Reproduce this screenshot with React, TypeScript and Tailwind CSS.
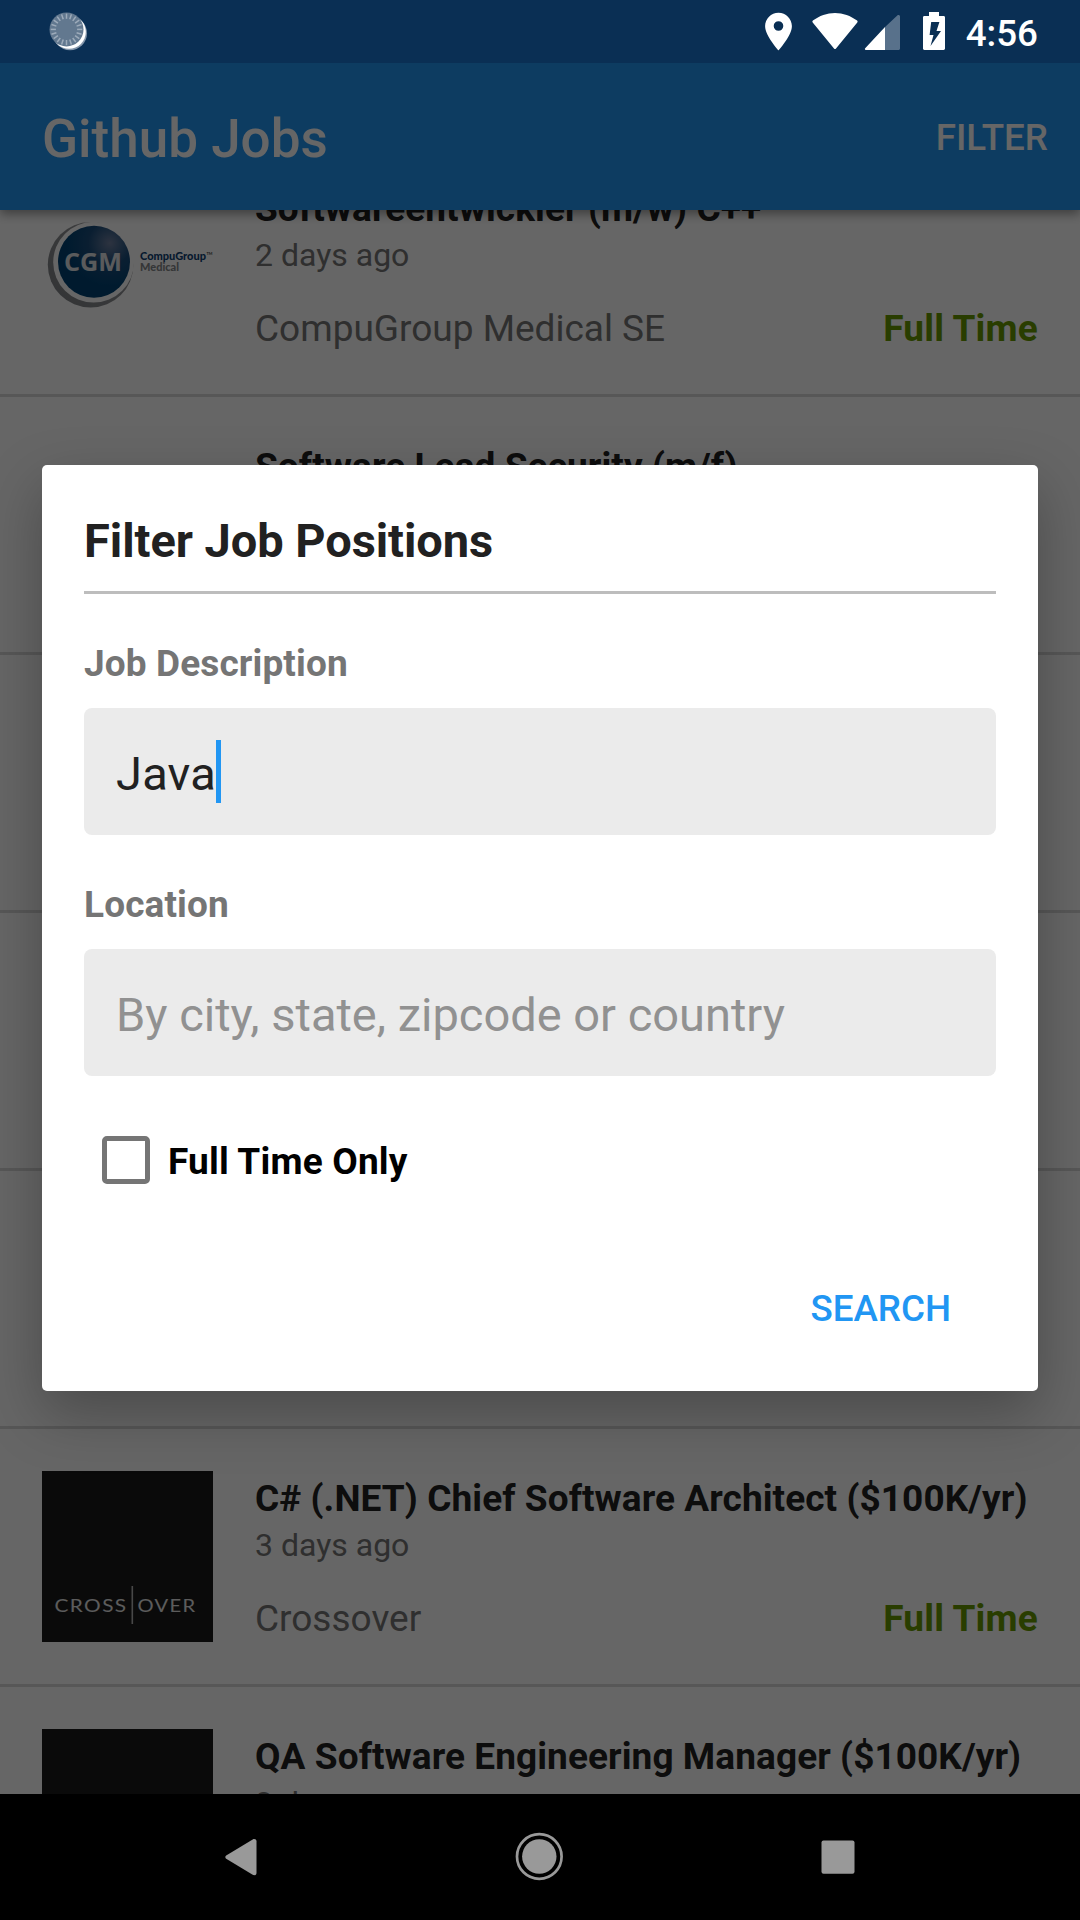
import React from "react";

type Job = {
  title: string;
  posted: string;
  company: string;
  logo: "cgm" | "crossover" | "none";
};

const jobs: (Job | null)[] = [
  { title: "Softwareentwickler (m/w) C++", posted: "2 days ago", company: "CompuGroup Medical SE", logo: "cgm" },
  { title: "Software Lead Security (m/f)", posted: "", company: "", logo: "none" },
  null,
  null,
  null,
  { title: "C# (.NET) Chief Software Architect ($100K/yr)", posted: "3 days ago", company: "Crossover", logo: "crossover" },
  { title: "QA Software Engineering Manager ($100K/yr)", posted: "3 days ago", company: "Crossover", logo: "crossover" },
];

function CgmLogo() {
  return (
    <svg width="171" height="171" viewBox="42 181 171 171">
      <defs>
        <radialGradient id="globe" cx="0.72" cy="0.24" r="0.6">
          <stop offset="0" stopColor="#7080a0" />
          <stop offset="0.5" stopColor="#1a4d7c" />
          <stop offset="1" stopColor="#004374" />
        </radialGradient>
        <linearGradient id="rim" x1="0" y1="1" x2="1" y2="0">
          <stop offset="0" stopColor="#7f8286" />
          <stop offset="0.6" stopColor="#8f9194" />
          <stop offset="1" stopColor="#c4c5c6" />
        </linearGradient>
      </defs>
      <circle cx="90.6" cy="264.8" r="42.8" fill="url(#rim)" />
      <circle cx="93.6" cy="262.2" r="40.4" fill="#fff" />
      <circle cx="94" cy="261.8" r="36" fill="url(#globe)" />
      <text x="64" y="270.7" fontFamily="Open Sans" fontWeight="700" fontSize="25" fill="#e2e4e6" textLength="58" lengthAdjust="spacingAndGlyphs">CGM</text>
      <text x="140" y="260.4" fontFamily="Lato" fontWeight="900" fontSize="11" fill="#0f3f74" textLength="66" lengthAdjust="spacingAndGlyphs">CompuGroup</text>
      <text x="206.5" y="254.5" fontFamily="Lato" fontSize="4.5" fontWeight="700" fill="#444" textLength="6" lengthAdjust="spacingAndGlyphs">TM</text>
      <text x="140" y="271" fontFamily="Lato" fontWeight="900" fontSize="11" fill="#85878a" textLength="39" lengthAdjust="spacingAndGlyphs">Medical</text>
    </svg>
  );
}

function CrossoverLogo() {
  return (
    <svg width="171" height="171" viewBox="0 0 171 171">
      <rect width="171" height="171" fill="#1a1a1a" />
      <g fontFamily="Lato" fontSize="18" letterSpacing="1.2" fill="#e6e6e6">
        <text x="12.5" y="141" textLength="73" lengthAdjust="spacingAndGlyphs">CROSS</text>
        <text x="95.5" y="141" textLength="59" lengthAdjust="spacingAndGlyphs">OVER</text>
      </g>
      <rect x="89.5" y="115" width="1.6" height="38" fill="#b5b5b5" />
    </svg>
  );
}

function JobRow({ job }: { job: Job | null }) {
  return (
    <li className="box-border flex h-[258px] shrink-0 gap-[42px] border-b-[3px] border-[#dadada] px-[42px]">
      <div className="mt-[42px] size-[171px] shrink-0">
        {job?.logo === "cgm" && <CgmLogo />}
        {job?.logo === "crossover" && <CrossoverLogo />}
      </div>
      {job && (
        <div className="min-w-0 flex-1 pt-[48px]">
          <h2 className="text-[37px] leading-[43px] font-bold tracking-[0.08px] whitespace-nowrap text-[#212121]">{job.title}</h2>
          {job.company && (
            <>
              <p className="mt-[7px] text-[32px] leading-[37px] text-[#757575]">{job.posted}</p>
              <div className="mt-[33px] flex justify-between text-[37px] leading-[43px]">
                <span className="text-[#757575]">{job.company}</span>
                <span className="font-bold tracking-[0.18px] text-[#669900]">Full Time</span>
              </div>
            </>
          )}
        </div>
      )}
    </li>
  );
}

function SyncIcon() {
  const ticks = Array.from({ length: 20 }, (_, i) => i * 18);
  return (
    <svg width="41" height="41" viewBox="48 11 41 41">
      <circle cx="70" cy="33.2" r="17" fill="#8496aa" />
      <circle cx="69" cy="32" r="16.8" fill="#fff" />
      <circle cx="66.5" cy="29.4" r="17" fill="#62788f" />
      {ticks.map((a) => (
        <line key={a} x1="66.5" y1="13.6" x2="66.5" y2="18.8" stroke="#9dabba" strokeWidth="1.5" transform={`rotate(${a} 66.5 29.4)`} />
      ))}
    </svg>
  );
}

function StatusIcons() {
  return (
    <svg width="190" height="63" viewBox="760 0 190 63" fill="#fff">
      <path fillRule="evenodd" d="M778.5 12.7c-7.4 0-13.4 6-13.4 13.3 0 9.9 13.4 24.3 13.4 24.3s13.4-14.4 13.4-24.3c0-7.3-6-13.3-13.4-13.3zm0 18.1a4.8 4.8 0 1 1 0-9.6 4.8 4.8 0 0 1 0 9.6z" />
      <path d="M812.7 22.4c-.5-.6-.4-1.3.2-1.8C819.3 15.8 827 13 835 13s15.7 2.8 22.1 7.6c.6.5.7 1.2.2 1.8L836 48.5c-.5.7-1.5.7-2 0z" />
      <path d="M885 27v23h-19.2c-.9 0-1.3-1-.6-1.7z" />
      <path fillOpacity="0.32" d="M885 27l12.3-11.5c.9-.9 2.7-.5 2.7 1V48.5c0 .8-.7 1.5-1.5 1.5H885z" />
      <path fillRule="evenodd" d="M929 12h10v4h4.6c.8 0 1.4.6 1.4 1.4v31.2c0 .8-.6 1.4-1.4 1.4h-19.2c-.8 0-1.4-.6-1.4-1.4V17.4c0-.8.6-1.4 1.4-1.4H929zM931.2 22l-1.6 13h3.9l-3 11 10.500-15h-4.500l2.900-9z" />
    </svg>
  );
}

function NavBar() {
  return (
    <nav className="relative z-10 flex h-[126px] shrink-0 items-center justify-between bg-black px-[215px]">
      <svg width="52" height="52" viewBox="215 1831 52 52">
        <path d="M226.2 1855.4l26.5-16c1.8-1 3.8-.1 3.8 1.900v31.600c0 2-2 2.900-3.800 1.900l-26.500-16c-1.200-.8-1.200-2.600 0-3.400z" fill="#999" />
      </svg>
      <svg width="52" height="52" viewBox="514 1831 52 52">
        <circle cx="539.3" cy="1856.5" r="22.3" fill="none" stroke="#999" strokeWidth="2.7" />
        <circle cx="539.3" cy="1856.5" r="17.2" fill="#999" />
      </svg>
      <svg width="52" height="52" viewBox="813 1831 52 52">
        <rect x="821.5" y="1840.4" width="33" height="33.4" rx="2" fill="#999" />
      </svg>
    </nav>
  );
}

function FilterDialog() {
  return (
    <section className="flex h-[926px] w-[996px] flex-col rounded-[5px] bg-white px-[42px] shadow-[0_22px_58px_rgba(0,0,0,0.28)]">
      <h2 className="mt-[48px] text-[47px] leading-[56px] font-bold tracking-[-0.05px] text-[#212121]">Filter Job Positions</h2>
      <hr className="mt-[22px] h-[3px] border-0 bg-[#bdbdbd]" />
      <label className="mt-[48px] text-[37px] leading-[43px] font-bold tracking-[0.12px] text-[#757575]">Job Description</label>
      <div className="mt-[23px] flex h-[127px] items-center rounded-[8px] bg-[#ebebeb] pl-[32px] text-[47px] leading-[56px] text-[#212121]">
        <span className="w-[100px] pt-[4px] tracking-[0.2px]">Java</span>
        <span className="h-[63px] w-[5px] bg-[#2196f3]" />
      </div>
      <label className="mt-[48px] text-[37px] leading-[43px] font-bold tracking-[0.12px] text-[#757575]">Location</label>
      <div className="mt-[23px] flex h-[127px] items-center rounded-[8px] bg-[#ebebeb] pt-[4px] pl-[32px] text-[47px] leading-[56px] text-[#919191]">
        By city, state, zipcode or country
      </div>
      <div className="mt-[60px] flex h-[48px] items-center gap-[18px] pl-[18px]">
        <span className="size-[48px] rounded-[5px] border-[5px] border-[#757575]" />
        <span className="pt-[2px] text-[37px] leading-[43px] font-bold tracking-[0.18px] text-black">Full Time Only</span>
      </div>
      <button className="mt-[103px] mr-[45px] self-end text-[36.75px] leading-[43px] font-medium text-[#2196f3]">SEARCH</button>
    </section>
  );
}

export default function App() {
  return (
    <div className="relative flex h-[1920px] w-[1080px] flex-col overflow-hidden bg-white font-[Roboto,sans-serif]">
      <header className="z-20 flex h-[63px] shrink-0 items-center justify-between bg-[#0a2f54] pr-[42px] pl-[48px]">
        <SyncIcon />
        <div className="flex items-center gap-[16px]">
          <StatusIcons />
          <span className="mt-[3px] text-[36.75px] leading-[43px] font-medium text-white">4:56</span>
        </div>
      </header>
      <div className="z-[1] flex h-[147px] shrink-0 items-center justify-between bg-[#2196f3] pr-[32px] pl-[42px] text-white shadow-[0_4px_10px_rgba(0,0,0,0.4)]">
        <h1 className="mt-[4px] text-[53px] leading-[62px] font-medium">Github Jobs</h1>
        <span className="mt-[2px] text-[36.75px] leading-[43px] font-medium">FILTER</span>
      </div>
      <ul className="flex min-h-0 flex-1 flex-col overflow-hidden">
        <li className="-mt-[71px]" />
        {jobs.map((job, i) => (
          <JobRow key={i} job={job} />
        ))}
      </ul>
      <NavBar />
      <div className="absolute inset-x-0 top-[63px] bottom-[126px] z-[5] flex justify-center bg-black/60 pt-[402px]">
        <FilterDialog />
      </div>
    </div>
  );
}
